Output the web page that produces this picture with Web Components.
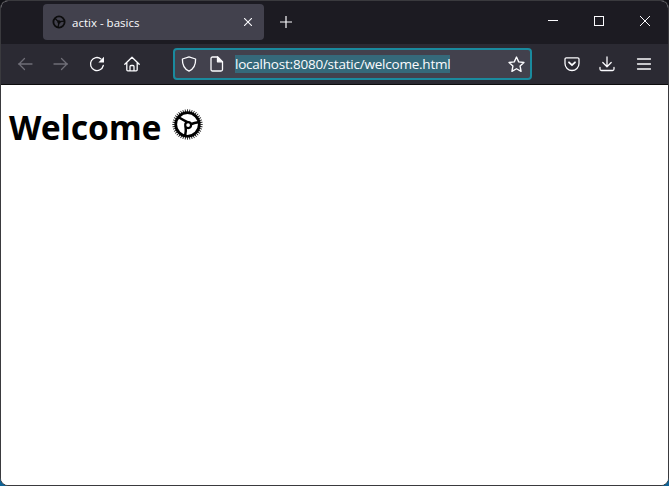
<!DOCTYPE html>
<html>
<head>
<meta charset="utf-8">
<title>actix - basics</title>
<style>
  html, body { margin: 0; padding: 0; height: 100%; overflow: hidden; }
  /* what shows behind the rounded window corners */
  body { background: linear-gradient(#111116 50%, #0f6396 50%); }
</style>
</head>
<body>
<browser-window>
  <tab-strip slot="top">
    <browser-tab label="actix - basics"></browser-tab>
  </tab-strip>
  <nav-toolbar slot="top"></nav-toolbar>
  <welcome-page></welcome-page>
</browser-window>

<script>
// shared icon paths, all on a 16x16 box
const ICONS = {
    back: '<path d="M15 8H1.500M7.500 2.500 2 8l5.500 5.500"/>',
    forward: '<path d="M1 8h13.500M8.500 2.500 14 8l-5.500 5.500"/>',
    reload: '<path d="M14.300 9.500A6.500 6.500 0 1 1 12 2.900"/><path d="M15 .8v5.600H9.400z" fill="currentColor" stroke="none"/>',
    home: '<path d="M.8 8.200 8 1.200l7.200 7M2.800 6.600v7.200a1 1 0 0 0 1 1h8.400a1 1 0 0 0 1-1V6.600M6 14.800v-4.300a1 1 0 0 1 1-1h2a1 1 0 0 1 1 1v4.300"/>',
    shield: '<path d="M8 .9 14.600 3c.2 6.300-1.900 10-6.600 12.100C3.300 13 1.200 9.300 1.400 3z"/>',
    page: '<path d="M3.500 1h5.300L13.500 5.700V13.500a1.500 1.500 0 0 1-1.500 1.500H3.500A1.500 1.500 0 0 1 2 13.500v-11A1.500 1.500 0 0 1 3.500 1z"/><path d="M8.500 1v4.800h5" fill="currentColor"/>',
    star: '<path d="m8 1 2.100 4.500 4.900.6-3.600 3.400.9 4.900L8 12l-4.300 2.400.9-4.900L1 6.100l4.900-.6z"/>',
    pocket: '<path d="M2.300 1.800h11.400a1.300 1.300 0 0 1 1.300 1.300v4.400a7 7 0 0 1-14 0V3.100a1.300 1.300 0 0 1 1.300-1.300z"/><path d="M5 6.300 8 9.200l3-2.900" stroke-width="1.800"/>',
    download: '<path d="M8 1v9.500M3.800 6.500 8 10.700l4.200-4.200M1 11.500V13a1.500 1.500 0 0 0 1.500 1.500h11A1.500 1.500 0 0 0 15 13v-1.500"/>',
    menu: '<path d="M1.500 3h13M1.500 8h13M1.500 13h13"/>'
};

class ToolIcon extends HTMLElement {
    constructor() {
        super();
        const shadow = this.attachShadow({ mode: 'open' });
        const name = this.getAttribute('name');
        const size = this.getAttribute('size') || '16';
        shadow.innerHTML = `
        <style>
          :host { display: block; line-height: 0; color: inherit; }
          svg { fill: none; stroke: currentColor; stroke-width: 1.3; stroke-linecap: round; stroke-linejoin: round; }
        </style>
        <svg width="${size}" height="${size}" viewBox="0 0 16 16">${ICONS[name]}</svg>`;
    }
}

class BrowserWindow extends HTMLElement {
    constructor() {
        super();
        this.attachShadow({ mode: 'open' }).innerHTML = `
        <style>
          :host {
              display: flex;
              flex-direction: column;
              width: 669px;
              height: 486px;
              box-sizing: border-box;
              border: 1px solid #3a3a3e;
              border-radius: 8px;
              overflow: hidden;
              background: #ffffff;
          }
          .top { border-bottom: 1px solid #0c0c0d; }
        </style>
        <div class="top"><slot name="top"></slot></div>
        <slot></slot>`;
    }
}

class TabStrip extends HTMLElement {
    constructor() {
        super();
        this.attachShadow({ mode: 'open' }).innerHTML = `
        <style>
          :host {
              display: flex;
              align-items: center;
              height: 43px;
              box-sizing: border-box;
              padding: 3px 0 4px 42px;
              background: #1c1b22;
              color: #fbfbfe;
          }
          .plus { width: 14px; margin-left: 15px; margin-right: auto; }
          .controls { display: flex; align-items: center; margin-top: -2px; }
          .controls div { width: 46px; display: flex; justify-content: center; }
          svg { display: block; fill: none; stroke: #fbfbfe; stroke-width: 1; shape-rendering: crispEdges; }
          .x { shape-rendering: auto; }
        </style>
        <slot></slot>
        <div class="plus">
          <svg width="14" height="14" viewBox="0 0 14 14" style="stroke-width:1.200;shape-rendering:auto"><path d="M7 1v12M1 7h12"/></svg>
        </div>
        <div class="controls">
          <div><svg width="10" height="10" viewBox="0 0 10 10"><path d="M0 4.500h10"/></svg></div>
          <div><svg width="10" height="10" viewBox="0 0 10 10"><path d="M.5.500h9v9h-9z"/></svg></div>
          <div><svg class="x" width="10" height="10" viewBox="0 0 10 10"><path d="M0 0l10 10M10 0 0 10"/></svg></div>
        </div>`;
    }
}

class BrowserTab extends HTMLElement {
    constructor() {
        super();
        const label = this.getAttribute('label') || '';
        this.attachShadow({ mode: 'open' }).innerHTML = `
        <style>
          :host {
              display: flex;
              align-items: center;
              width: 221px;
              height: 36px;
              box-sizing: border-box;
              padding: 0 12px 0 9px;
              background: #42414d;
              border-radius: 4px;
              color: #fbfbfe;
              font: 11.500px "Open Sans", "Noto Sans", sans-serif;
          }
          .fav { display: block; margin-right: 6px; }
          .label { flex: 1; white-space: nowrap; }
          .close { display: block; fill: none; stroke: #fbfbfe; stroke-width: 1.100; }
        </style>
        <svg class="fav" width="14" height="14" viewBox="0 0 100 100">
          <circle cx="50" cy="50" r="40" fill="none" stroke="#0c0c0d" stroke-width="13"/>
          <g fill="none" stroke="#0c0c0d" stroke-width="10">
            <path d="M50 50Q36 40 22 24"/>
            <path d="M50 50Q70 46 90 44"/>
            <path d="M50 50Q48 70 42 90"/>
          </g>
          <circle cx="50" cy="50" r="12" fill="#0c0c0d"/>
        </svg>
        <span class="label">${label}</span>
        <svg class="close" width="8" height="8" viewBox="0 0 8 8"><path d="M0 0l8 8M8 0 0 8"/></svg>`;
    }
}

class NavToolbar extends HTMLElement {
    constructor() {
        super();
        this.attachShadow({ mode: 'open' }).innerHTML = `
        <style>
          :host {
              display: flex;
              align-items: center;
              height: 40px;
              box-sizing: border-box;
              padding: 0 16px 0 16px;
              background: #2b2a33;
              color: #fbfbfe;
          }
          .nav { display: flex; align-items: center; gap: 19px; margin-right: 33px; }
          .muted { color: #6f6e77; }
          .right { display: flex; align-items: center; gap: 19px; margin-left: 32px; }
        </style>
        <div class="nav">
          <tool-icon class="muted" name="back"></tool-icon>
          <tool-icon class="muted" name="forward" style="margin-left:1px"></tool-icon>
          <tool-icon name="reload" style="margin-left:1px"></tool-icon>
          <tool-icon name="home"></tool-icon>
        </div>
        <url-bar value="localhost:8080/static/welcome.html"></url-bar>
        <div class="right">
          <tool-icon name="pocket"></tool-icon>
          <tool-icon name="download"></tool-icon>
          <tool-icon name="menu" style="margin-left:2px"></tool-icon>
        </div>`;
    }
}

class UrlBar extends HTMLElement {
    constructor() {
        super();
        const value = this.getAttribute('value') || '';
        this.attachShadow({ mode: 'open' }).innerHTML = `
        <style>
          :host {
              display: flex;
              align-items: center;
              width: 359px;
              height: 32px;
              box-sizing: border-box;
              padding: 0 5px 0 6px;
              background: #42414d;
              border: 2px solid #1a8a9e;
              border-radius: 4px;
              color: #fbfbfe;
              font: 13.500px "Open Sans", "Noto Sans", sans-serif;
          }
          tool-icon { flex: none; }
          .page { margin-left: 12px; margin-right: 10px; }
          .url {
              flex: none;
              width: 215px;
              height: 18px;
              line-height: 18px;
              background: #35697a;
              white-space: nowrap;
              letter-spacing: -0.22px;
          }
          .star { margin-left: auto; }
        </style>
        <tool-icon name="shield"></tool-icon>
        <tool-icon class="page" name="page"></tool-icon>
        <span class="url">${value}</span>
        <tool-icon class="star" name="star" size="17"></tool-icon>`;
    }
}

class WelcomePage extends HTMLElement {
    constructor() {
        super();
        // the sprocket teeth are generated instead of typed out
        let teeth = '';
        for (let i = 0; i < 40; i++) {
            teeth += `<rect x="48.700" y="1" width="2.600" height="8" transform="rotate(${i * 9} 50 50)"/>`;
        }
        this.attachShadow({ mode: 'open' }).innerHTML = `
        <style>
          :host {
              display: block;
              flex: 1;
              padding: 21px 8px 0 8px;
              background: #ffffff;
              color: #000000;
          }
          h1 {
              display: flex;
              align-items: center;
              gap: 10px;
              margin: 0;
              font: 700 33.500px/42px "Noto Sans", "Open Sans", sans-serif;
          }
          svg { display: block; margin-top: -6px; }
        </style>
        <h1>Welcome
          <svg width="31" height="31" viewBox="0 0 100 100">
            <g fill="#000">${teeth}</g>
            <circle cx="50" cy="50" r="38" fill="none" stroke="#000" stroke-width="9"/>
            <g fill="none" stroke="#000" stroke-width="8">
              <path d="M50 42Q36 36 20 26"/>
              <path d="M58 50Q72 44 88 42"/>
              <path d="M44 56Q46 72 42 88"/>
            </g>
            <circle cx="52" cy="52" r="13" fill="#000"/>
            <circle cx="52" cy="52" r="6" fill="#fff"/>
          </svg>
        </h1>`;
    }
}

customElements.define('tool-icon', ToolIcon);
customElements.define('browser-tab', BrowserTab);
customElements.define('tab-strip', TabStrip);
customElements.define('url-bar', UrlBar);
customElements.define('nav-toolbar', NavToolbar);
customElements.define('welcome-page', WelcomePage);
customElements.define('browser-window', BrowserWindow);
</script>
</body>
</html>
